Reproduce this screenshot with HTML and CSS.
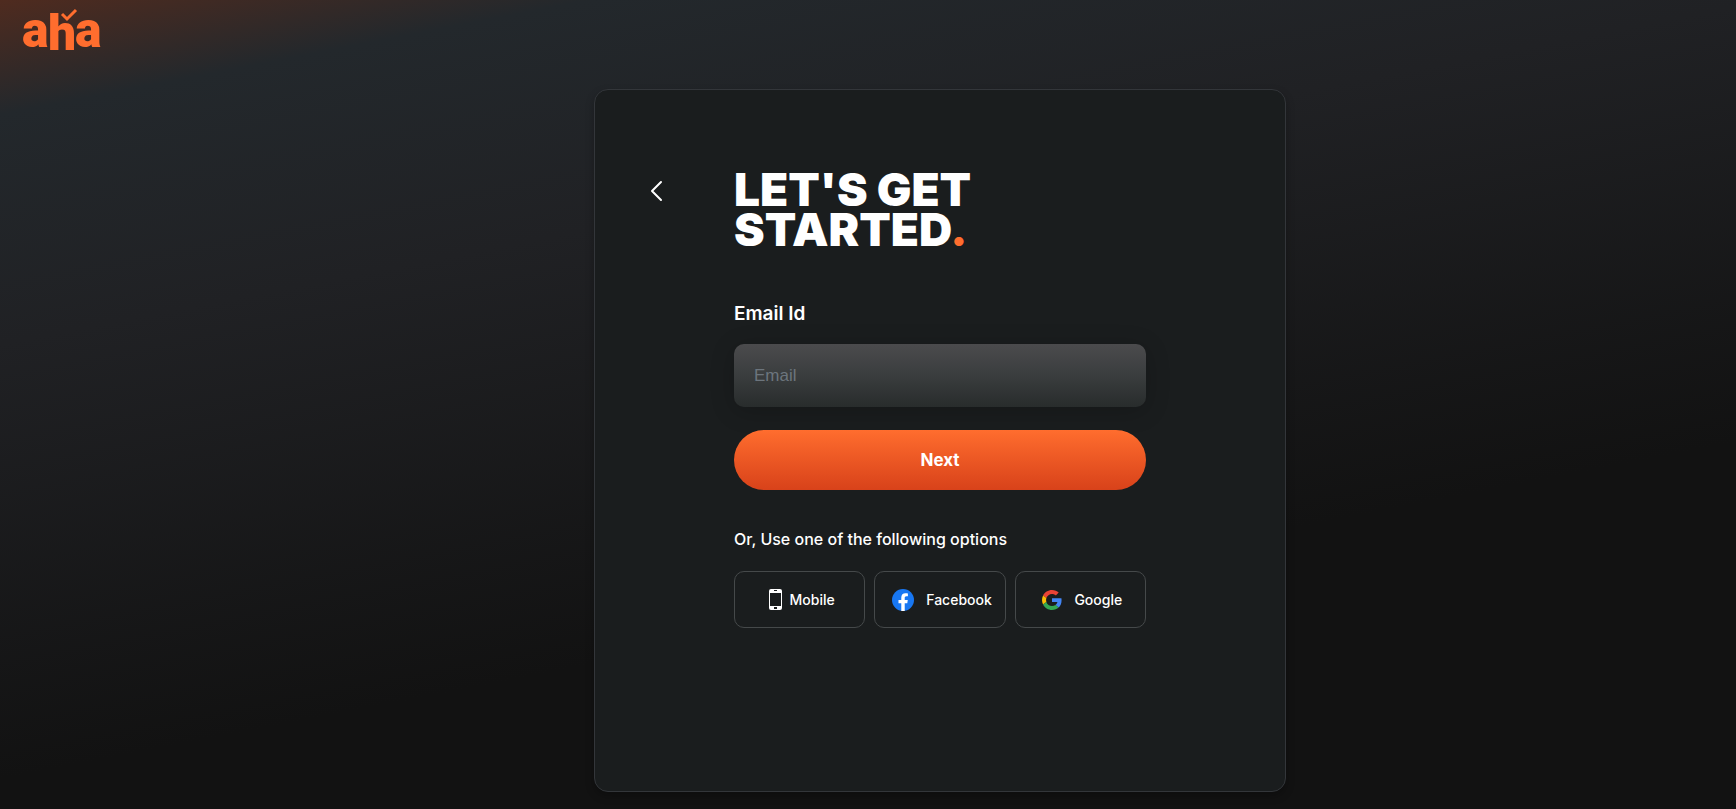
FILE: index.html
```html
<!DOCTYPE html>
<html lang="en">
<head>
    <meta charset="UTF-8">
    <meta name="viewport" content="width=device-width, initial-scale=1.0">
    <title>aha</title>
    <link rel="stylesheet" href="styles.css">
</head>
<body>
    <header class="header">
        <a class="logo" href="#" aria-label="aha">
            <svg width="80" height="44" viewBox="0 0 80 44">
                <g class="logo-text">
                    <text x="0" y="39">a</text>
                    <text x="26" y="42">h</text>
                    <text x="53" y="39">a</text>
                </g>
                <path d="M40 6l5 5 9-9" fill="none" stroke="#ff6d2e" stroke-width="3"/>
            </svg>
        </a>
    </header>
    <main class="main">
        <div class="card">
            <button class="back" type="button" aria-label="Back">
                <svg width="24" height="24" viewBox="0 0 24 24">
                    <path d="M18 3L9 12l9 9" fill="none" stroke="#fff" stroke-width="2" stroke-linecap="round" stroke-linejoin="round"/>
                </svg>
            </button>
            <form class="form">
                <h1 class="title">LET'S GET<br>STARTED<span class="dot">.</span></h1>
                <label class="label" for="email">Email Id</label>
                <input id="email" class="email" type="email" placeholder="Email">
                <button class="next" type="button">Next</button>
                <p class="or">Or, Use one of the following options</p>
                <div class="options">
                    <button class="option option-mobile" type="button">
                        <svg width="13" height="21" viewBox="0 0 13 21">
                            <path fill="#fff" fill-rule="evenodd" d="M2 0h9a2 2 0 0 1 2 2v17a2 2 0 0 1-2 2H2a2 2 0 0 1-2-2V2a2 2 0 0 1 2-2zM1 4v13h11V4zM5 1v1h3v-1zM5 18v2h3v-2z"/>
                        </svg>
                        Mobile
                    </button>
                    <button class="option" type="button">
                        <svg width="22" height="22" viewBox="0 0 24 24">
                            <circle cx="12" cy="12" r="12" fill="#1877f2"/>
                            <path fill="#fff" d="M16.671 15.469L17.203 12h-3.328V9.749c0-.949.465-1.874 1.956-1.874h1.513V4.922s-1.374-.234-2.686-.234c-2.741 0-4.533 1.661-4.533 4.668V12H7.078v3.469h3.047V24h3.750v-8.531z"/>
                        </svg>
                        Facebook
                    </button>
                    <button class="option" type="button">
                        <svg width="20" height="20" viewBox="0 0 48 48">
                            <path fill="#ea4335" d="M24 9.500c3.540 0 6.710 1.220 9.210 3.600l6.850-6.850C35.900 2.380 30.470 0 24 0 14.620 0 6.510 5.380 2.560 13.220l7.980 6.190C12.430 13.720 17.740 9.500 24 9.500z"/>
                            <path fill="#4285f4" d="M46.980 24.550c0-1.570-.15-3.090-.38-4.550H24v9.020h12.940c-.58 2.960-2.260 5.480-4.780 7.180l7.730 6c4.510-4.180 7.090-10.360 7.090-17.650z"/>
                            <path fill="#fbbc05" d="M10.530 28.590c-.48-1.450-.76-2.990-.76-4.590s.27-3.140.76-4.590l-7.980-6.190C.92 16.460 0 20.120 0 24s.92 7.540 2.560 10.780z"/>
                            <path fill="#34a853" d="M24 48c6.480 0 11.930-2.130 15.890-5.810l-7.730-6c-2.150 1.450-4.920 2.300-8.160 2.300-6.260 0-11.570-4.220-13.470-9.910l-7.980 6.190C6.510 42.620 14.620 48 24 48z"/>
                        </svg>
                        Google
                    </button>
                </div>
            </form>
        </div>
    </main>
</body>
</html>
```

FILE: styles.css
```css
* {
    margin: 0;
    padding: 0;
    box-sizing: border-box;
}
body {
    min-height: 100vh;
    background: linear-gradient(169deg, #4f2b1f 0%, #23282c 10%, #202124 30%, #121212 68%);
    font-family: Inter, "Liberation Sans", sans-serif;
    color: white;
}
button {
    font-family: inherit;
    color: inherit;
    border: none;
    background: none;
    cursor: pointer;
}
.header {
    height: 89px;
    padding: 8px 22px;
}
.logo {
    display: inline-block;
}
.logo svg {
    display: block;
    overflow: visible;
}
.logo-text {
    font-family: Roboto, sans-serif;
    font-size: 50px;
    font-weight: 900;
    fill: #ff6d2e;
}
.main {
    display: flex;
    justify-content: center;
    padding-left: 144px;
    padding-bottom: 16px;
}
.card {
    display: grid;
    grid-template-columns: 91px 1fr;
    align-items: start;
    width: 100%;
    max-width: 692px;
    padding: 79px 139px 163px 48px;
    background: #1a1d1e;
    border: 1px solid #33363a;
    border-radius: 14px;
    box-shadow: 0 4px 8px rgba(0, 0, 0, 0.25);
}
.back {
    justify-self: start;
    height: 24px;
    margin-top: 10px;
}
.back svg {
    display: block;
}
.form {
    display: flex;
    flex-direction: column;
}
.title {
    font-size: 46px;
    font-weight: 900;
    line-height: 40px;
}
.dot {
    color: #ff6d2e;
}
.label {
    margin-top: 53px;
    font-size: 19px;
    font-weight: 600;
    line-height: 24px;
}
.email {
    width: 100%;
    height: 63px;
    margin-top: 18px;
    padding: 0 20px;
    border: none;
    border-radius: 10px;
    background: linear-gradient(#4b4b4d, #3a3d3e 50%, #282c2c);
    box-shadow: 0 4px 24px rgba(0, 0, 0, 0.2);
    font-family: "Liberation Sans", Arial, sans-serif;
    font-size: 17px;
    color: white;
}
.email::placeholder {
    color: #6c757d;
}
.next {
    height: 60px;
    margin-top: 23px;
    border-radius: 30px;
    background: linear-gradient(#ff6d2e, #d8421a);
    font-size: 17px;
    font-weight: 700;
}
.or {
    margin-top: 37px;
    font-size: 16px;
    font-weight: 500;
    line-height: 24px;
}
.options {
    display: grid;
    grid-template-columns: repeat(3, 1fr);
    gap: 9px;
    margin-top: 20px;
}
.option {
    display: flex;
    justify-content: center;
    align-items: center;
    gap: 12px;
    height: 57px;
    padding-left: 4px;
    border: 1px solid #45494a;
    border-radius: 10px;
    font-size: 14px;
    font-weight: 500;
}
.option-mobile {
    gap: 8px;
}
```
